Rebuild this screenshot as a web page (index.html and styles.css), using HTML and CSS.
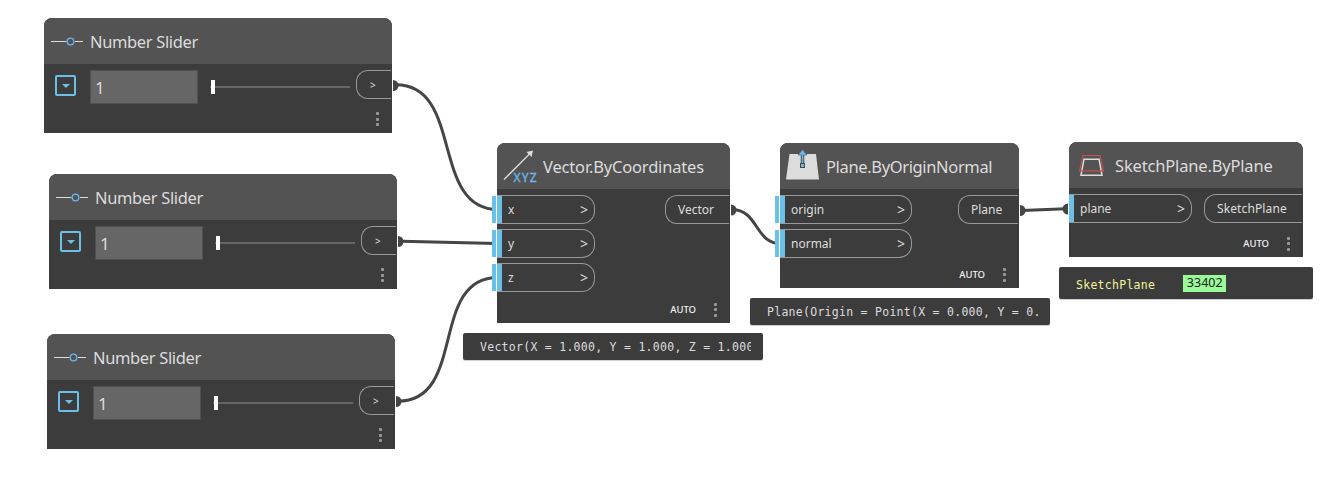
FILE: index.html
```html
<!DOCTYPE html>
<html lang="en">
<head>
<meta charset="utf-8">
<title>Node graph</title>
<link rel="stylesheet" href="styles.css">
</head>
<body>
<main class="canvas">
  <svg class="wires" width="1330" height="496" viewBox="0 0 1330 496">
    <g fill="none" stroke="#454545" stroke-width="3">
      <path d="M396 84.700C464 84.700 430 209.500 498 209.500"/>
      <path d="M401 241.300L497 243.600"/>
      <path d="M398 401.200C467 401.200 429 277.500 498 277.500"/>
      <path d="M733 209.800C758 209.800 755 243.700 781 243.700"/>
      <path d="M1022 210.500L1066 208.800"/>
    </g>
    <g fill="#454545">
      <path d="M393 80A5.500 5.500 0 0 1 393 91Z"/>
      <path d="M398 236A5.500 5.500 0 0 1 398 247Z"/>
      <path d="M396 396A5.500 5.500 0 0 1 396 407Z"/>
      <path d="M731 204.500A5.500 5.500 0 0 1 731 215.500Z"/>
      <path d="M1020 205A5.500 5.500 0 0 1 1020 216Z"/>
      <path d="M1068 203.500A5.500 5.500 0 0 0 1068 214.500Z"/>
    </g>
  </svg>

  <section class="node slider-node slider-a">
    <header class="node-head">
      <svg class="slider-icon" width="34" height="12" viewBox="0 0 34 12"><path d="M0 6.500H15.500M24 6.500H32" stroke="#ddd"/><circle cx="19.500" cy="6.500" r="3.300" fill="none" stroke="#6bb8ee" stroke-width="1.300"/></svg>
      <h2 class="title tight">Number Slider</h2>
    </header>
    <div class="slider-row">
      <span class="toggle"><i class="caret"></i></span>
      <span class="value">1</span>
      <span class="track"><i class="thumb"></i></span>
      <span class="out-port small">&gt;</span>
    </div>
    <span class="dots"><i></i><i></i><i></i></span>
  </section>

  <section class="node slider-node slider-b">
    <header class="node-head">
      <svg class="slider-icon" width="34" height="12" viewBox="0 0 34 12"><path d="M0 6.500H15.500M24 6.500H32" stroke="#ddd"/><circle cx="19.500" cy="6.500" r="3.300" fill="none" stroke="#6bb8ee" stroke-width="1.300"/></svg>
      <h2 class="title tight">Number Slider</h2>
    </header>
    <div class="slider-row">
      <span class="toggle"><i class="caret"></i></span>
      <span class="value">1</span>
      <span class="track"><i class="thumb"></i></span>
      <span class="out-port small">&gt;</span>
    </div>
    <span class="dots"><i></i><i></i><i></i></span>
  </section>

  <section class="node slider-node slider-c">
    <header class="node-head">
      <svg class="slider-icon" width="34" height="12" viewBox="0 0 34 12"><path d="M0 6.500H15.500M24 6.500H32" stroke="#ddd"/><circle cx="19.500" cy="6.500" r="3.300" fill="none" stroke="#6bb8ee" stroke-width="1.300"/></svg>
      <h2 class="title tight">Number Slider</h2>
    </header>
    <div class="slider-row">
      <span class="toggle"><i class="caret"></i></span>
      <span class="value">1</span>
      <span class="track"><i class="thumb"></i></span>
      <span class="out-port small">&gt;</span>
    </div>
    <span class="dots"><i></i><i></i><i></i></span>
  </section>

  <section class="node vector-node">
    <header class="node-head">
      <svg class="head-icon" width="42" height="46" viewBox="0 0 42 46"><path d="M7 36.500L33 10.500" stroke="#ddd" stroke-width="1.300"/><path d="M36 7.500L34.500 14L29.500 9Z" fill="#ddd"/><text class="xyz" x="16.500" y="38.500" textLength="23">XYZ</text></svg>
      <h2 class="title">Vector.ByCoordinates</h2>
    </header>
    <div class="ports">
      <div class="inputs">
        <span class="in-port">x<b>&gt;</b></span>
        <span class="in-port">y<b>&gt;</b></span>
        <span class="in-port">z<b>&gt;</b></span>
      </div>
      <span class="out-port">Vector</span>
    </div>
    <footer class="node-foot">AUTO<span class="dots"><i></i><i></i><i></i></span></footer>
  </section>

  <section class="node plane-node">
    <header class="node-head">
      <svg class="head-icon" width="42" height="46" viewBox="0 0 42 46"><path d="M9.500 11H36L39 36.500H6Z" fill="#dcdcdc"/><path d="M22.500 20V10" stroke="#4a4a4a" stroke-width="3.500"/><path d="M22.500 6.500L27 12H18Z" fill="#6bb8ee" stroke="#4a4a4a" stroke-width=".6"/><path d="M22.500 20V10" stroke="#6bb8ee" stroke-width="1.600"/><rect x="20.500" y="20.500" width="4" height="4" fill="#6bb8ee" stroke="#4a4a4a"/></svg>
      <h2 class="title tight">Plane.ByOriginNormal</h2>
    </header>
    <div class="ports">
      <div class="inputs">
        <span class="in-port">origin<b>&gt;</b></span>
        <span class="in-port">normal<b>&gt;</b></span>
      </div>
      <span class="out-port">Plane</span>
    </div>
    <footer class="node-foot">AUTO<span class="dots"><i></i><i></i><i></i></span></footer>
  </section>

  <section class="node sketch-node">
    <header class="node-head">
      <svg class="head-icon" width="42" height="46" viewBox="0 0 42 46" fill="none"><path d="M16 17.200H31L34 33.200H13Z" stroke="#ddd" stroke-width="1.500"/><path d="M15 13.500H32L35.500 28.800H11.500Z" stroke="#c65050" stroke-width="1.200"/></svg>
      <h2 class="title">SketchPlane.ByPlane</h2>
    </header>
    <div class="ports">
      <div class="inputs">
        <span class="in-port connected">plane<b>&gt;</b></span>
      </div>
      <span class="out-port">SketchPlane</span>
    </div>
    <footer class="node-foot">AUTO<span class="dots"><i></i><i></i><i></i></span></footer>
  </section>

  <div class="bubble vector-bubble"><span class="clip">Vector(X = 1.000, Y = 1.000, Z = 1.000)</span></div>
  <div class="bubble plane-bubble"><span>Plane(Origin = Point(X = 0.000, Y = 0.</span></div>
  <div class="bubble sketch-bubble"><span class="kind">SketchPlane</span><span class="element-id">33402</span></div>
</main>
</body>
</html>
```
FILE: styles.css
```css
* { box-sizing: border-box; }

body {
  margin: 0;
  background: #fff;
  font-family: "Noto Sans", sans-serif;
  color: #dcdcdc;
}

.canvas {
  position: relative;
  width: 1330px;
  height: 496px;
  overflow: hidden;
}

.node {
  position: absolute;
  display: flex;
  flex-direction: column;
  background: #3c3c3c;
  border-radius: 8px 8px 0 0;
}

.slider-node { width: 348px; height: 115px; }
.slider-a { left: 44px; top: 18px; }
.slider-b { left: 49px; top: 174px; }
.slider-c { left: 47px; top: 334px; }
.vector-node { left: 497px; top: 143px; width: 233px; height: 180px; }
.plane-node { left: 780px; top: 143px; width: 239px; height: 145px; }
.sketch-node { left: 1069px; top: 142px; width: 234px; height: 115px; }

.node-head {
  display: flex;
  align-items: center;
  height: 46px;
  flex: none;
  background: #535353;
  border-radius: 8px 8px 0 0;
}

.slider-icon { margin: 0 5px 0 7px; flex: none; }
.head-icon { margin-right: 4px; flex: none; }
.sketch-node .head-icon { margin-left: -1px; margin-right: 5px; }

.xyz {
  font-size: 12px;
  fill: #6bb8ee;
  stroke: #6bb8ee;
  stroke-width: .3px;
}

.title {
  margin: 2px 0 0;
  font-size: 16.5px;
  font-weight: 400;
  line-height: 24px;
  letter-spacing: -.17px;
  white-space: nowrap;
}
.tight { letter-spacing: -.36px; }

.slider-row {
  display: flex;
  align-items: flex-start;
  padding: 6px 1px 0 11px;
}

.toggle {
  display: flex;
  align-items: center;
  justify-content: center;
  width: 21px;
  height: 21px;
  margin: 5px 14px 0 0;
  border: 2px solid #6ac0e7;
  border-radius: 2px;
}
.caret {
  border: 4px solid transparent;
  border-top-color: #6ac0e7;
  border-bottom: 0;
}

.value {
  width: 108px;
  height: 34px;
  padding-left: 4px;
  border: 1px solid #505050;
  background: #666;
  font-size: 17px;
  line-height: 33px;
}

.track {
  display: flex;
  align-items: center;
  width: 140px;
  height: 2px;
  margin: 16px 6px 0 12px;
  background: #666;
}
.thumb { width: 4px; height: 14px; margin-left: 1px; background: #fff; }

.out-port {
  display: flex;
  align-items: center;
  height: 30px;
  padding: 0 12px;
  border: 1px solid #999;
  border-right: 0;
  border-radius: 12px 0 0 12px;
  font-size: 12px;
  line-height: 28px;
}
.small { flex: 1; height: 29px; font-size: 10px; padding: 0 13px; }

.dots {
  display: flex;
  flex-direction: column;
  justify-content: space-between;
  width: 3px;
  height: 14px;
}
.dots i { height: 3px; background: #999; border-radius: 1px; }
.slider-node .dots { align-self: flex-end; margin: 8px 13px 0 0; }

.ports {
  display: flex;
  justify-content: space-between;
  align-items: flex-start;
  padding: 6px 1px 0 0;
}
.inputs { display: grid; gap: 5px; }

.in-port {
  position: relative;
  display: flex;
  align-items: center;
  justify-content: space-between;
  width: 98px;
  height: 29px;
  padding: 0 6px 0 11px;
  border: 1px solid #999;
  border-left: 0;
  border-radius: 0 13px 13px 0;
  font-size: 12px;
  line-height: 28px;
}
.in-port b { font-weight: 400; font-size: 14px; }
.in-port::before {
  content: "";
  position: absolute;
  left: -5px;
  top: 0;
  width: 10px;
  height: 27px;
  background: linear-gradient(90deg, #6ac0e7 4px, #fff 4px 5px, #6ac0e7 5px);
}
.in-port.connected::before { left: 0; width: 5px; background: #6ac0e7; }
.out-port { height: 29px; }
.plane-node .in-port { width: 132px; }
.sketch-node .in-port { width: 123px; }
.vector-node .out-port { width: 64px; }
.plane-node .out-port { width: 60px; }
.sketch-node .out-port { width: 98px; letter-spacing: .12px; }

.node-foot {
  display: flex;
  align-items: center;
  justify-content: flex-end;
  gap: 18px;
  margin: auto 13px 6px 0;
  font-size: 9.5px;
  font-weight: 500;
  height: 15px;
  line-height: 15px;
  color: #f2f2f2;
}

.bubble {
  position: absolute;
  display: flex;
  align-items: center;
  width: 300px;
  height: 27px;
  padding: 1px 12px 0 17px;
  border-radius: 2px;
  background: #3c3c3c;
  box-shadow: 0 1px 1px #ccc;
  font-family: "DejaVu Sans Mono", monospace;
  font-size: 11.5px;
  line-height: 26px;
  letter-spacing: .277px;
  white-space: pre;
}
.vector-bubble { left: 463px; top: 333px; }
.plane-bubble { left: 750px; top: 298px; }
.sketch-bubble { left: 1059px; top: 267px; width: 254px; height: 32px; gap: 28px; }
.clip { flex: 1; overflow: hidden; }
.kind { color: #f2f29a; padding-top: 2px; }
.element-id {
  width: 43px;
  height: 17px;
  background: #98fb98;
  color: #222;
  font-family: "Noto Sans", sans-serif;
  font-size: 12.5px;
  line-height: 16px;
  letter-spacing: 0;
  text-align: center;
}

.wires { position: absolute; left: 0; top: 0; }
```
